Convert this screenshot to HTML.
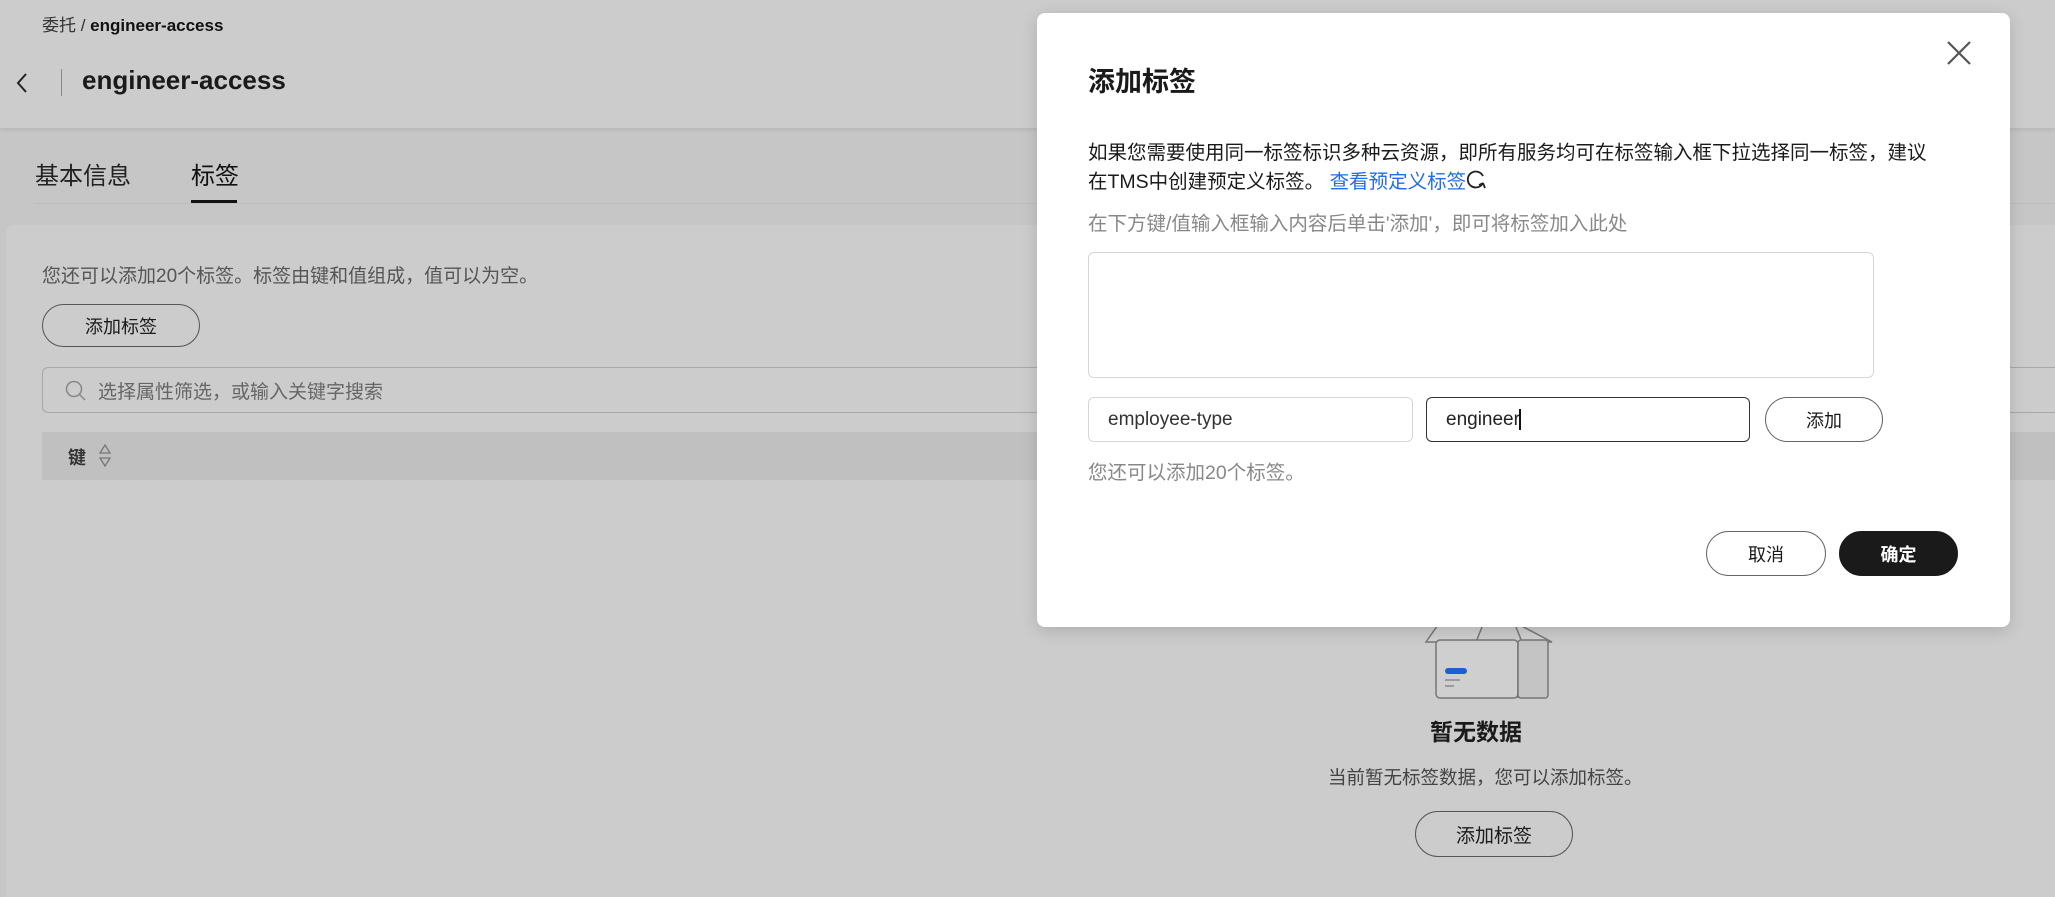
<!DOCTYPE html>
<html><head><meta charset="utf-8"><style>
*{box-sizing:border-box;margin:0;padding:0}
body{width:2055px;height:897px;overflow:hidden;background:#c6c6c6;font-family:"Liberation Sans","Noto Sans CJK SC",sans-serif;position:relative;color:#1a1a1a}
.a{position:absolute;white-space:nowrap}
.btn{position:absolute;border:1.5px solid #555;border-radius:30px;display:flex;align-items:center;justify-content:center;font-size:18px;color:#1a1a1a}
</style></head><body>
<div class="a" style="left:0;top:0;width:2055px;height:128px;background:#cccccc;box-shadow:0 2px 4px rgba(0,0,0,.08)"></div>
<div class="a" style="left:42px;top:11px;font-size:17px;color:#333">委托 / <b style="color:#111">engineer-access</b></div>
<svg class="a" style="left:14px;top:71px" width="16" height="24" viewBox="0 0 16 24"><path d="M12 3 L4 12 L12 21" fill="none" stroke="#222" stroke-width="2"/></svg>
<div class="a" style="left:61px;top:69px;width:1px;height:27px;background:#888"></div>
<div class="a" style="left:82px;top:65px;font-size:26px;font-weight:bold;color:#1a1a1a">engineer-access</div>
<div class="a" style="left:35px;top:156px;font-size:24px;color:#222">基本信息</div>
<div class="a" style="left:191px;top:156px;font-size:24px;color:#111">标签</div>
<div class="a" style="left:191px;top:200px;width:46px;height:3px;background:#111"></div>
<div class="a" style="left:34px;top:203px;width:2021px;height:1px;background:#bdbdbd"></div>
<div class="a" style="left:6px;top:225px;width:2049px;height:672px;background:#cccccc;border-radius:8px 0 0 0"></div>
<div class="a" style="left:42px;top:261px;font-size:19px;color:#555">您还可以添加20个标签。标签由键和值组成，值可以为空。</div>
<div class="btn" style="left:42px;top:304px;width:158px;height:43px">添加标签</div>
<div class="a" style="left:42px;top:367px;width:2013px;height:46px;border:1.5px solid #a8a8a8;border-right:none;border-radius:6px 0 0 6px"></div>
<svg class="a" style="left:64px;top:379px" width="24" height="24" viewBox="0 0 24 24"><circle cx="10" cy="10" r="7.5" fill="none" stroke="#888" stroke-width="1.5"/><path d="M15.5 15.5 L21 21" stroke="#888" stroke-width="1.5"/></svg>
<div class="a" style="left:98px;top:377px;font-size:19px;color:#666">选择属性筛选，或输入关键字搜索</div>
<div class="a" style="left:42px;top:432px;width:2013px;height:48px;background:#c0c0c0"></div>
<div class="a" style="left:68px;top:444px;font-size:18px;font-weight:bold;color:#333">键</div>
<svg class="a" style="left:98px;top:442px" width="14" height="28" viewBox="0 0 14 28"><path d="M2 11 L7 3 L12 11 Z M2 16 L7 24 L12 16 Z" fill="none" stroke="#777" stroke-width="1.3"/></svg>
<svg class="a" style="left:1424px;top:620px" width="136" height="80" viewBox="0 0 136 80"><path d="M2 22 L16 2 L60 2 L52 22 Z" fill="#d0d0d0" stroke="#777" stroke-width="1.5"/><path d="M90 2 L128 22 L98 22 Z" fill="#d0d0d0" stroke="#777" stroke-width="1.5"/><rect x="12" y="20" width="82" height="58" rx="4" fill="#cfcfcf" stroke="#777" stroke-width="1.5"/><path d="M94 22 L94 78" stroke="#777" stroke-width="1.5"/><rect x="94" y="20" width="30" height="58" rx="3" fill="#c4c4c4" stroke="#777" stroke-width="1.5"/><rect x="21" y="48" width="22" height="6" rx="3" fill="#1b5fd4"/><path d="M21 60 H36 M21 66 H30" stroke="#888" stroke-width="1.5"/></svg>
<div class="a" style="left:1430px;top:713px;font-size:23px;font-weight:bold;color:#1a1a1a">暂无数据</div>
<div class="a" style="left:1328px;top:764px;font-size:18.5px;color:#444">当前暂无标签数据，您可以添加标签。</div>
<div class="btn" style="left:1415px;top:811px;width:158px;height:46px;font-size:19px">添加标签</div>

<div class="a" style="left:1037px;top:13px;width:973px;height:614px;background:#fff;border-radius:8px;box-shadow:0 4px 16px rgba(0,0,0,.15)"></div>
<div class="a" style="left:1088px;top:60px;font-size:27px;font-weight:bold;color:#1a1a1a">添加标签</div>
<svg class="a" style="left:1946px;top:40px" width="26" height="26" viewBox="0 0 26 26"><path d="M2 2 L24 24 M24 2 L2 24" stroke="#555" stroke-width="2.2"/></svg>
<div class="a" style="left:1088px;top:139px;font-size:19.5px;color:#1a1a1a;line-height:29px">如果您需要使用同一标签标识多种云资源，即所有服务均可在标签输入框下拉选择同一标签，建议<br>在TMS中创建预定义标签。 <span style="color:#1e6fe8">查看预定义标签</span><svg width="22" height="22" viewBox="0 0 22 22" style="vertical-align:-3px"><path d="M17 14 A8 8 0 1 1 17 7" fill="none" stroke="#222" stroke-width="1.8"/><path d="M17 14 L19 19 M17 14 L13 16" stroke="#222" stroke-width="1.8"/></svg></div>
<div class="a" style="left:1088px;top:207px;font-size:19.5px;color:#888">在下方键/值输入框输入内容后单击'添加'，即可将标签加入此处</div>
<div class="a" style="left:1088px;top:252px;width:786px;height:126px;border:1.5px solid #d6d6d6;border-radius:6px"></div>
<div class="a" style="left:1088px;top:397px;width:325px;height:45px;border:1.5px solid #d6d6d6;border-radius:6px;font-size:19px;color:#333;padding:11px 0 0 19px">employee-type</div>
<div class="a" style="left:1426px;top:397px;width:324px;height:45px;border:1.5px solid #333;border-radius:6px;font-size:19px;color:#222;padding:11px 0 0 19px">engineer<span style="border-left:2px solid #111;margin-left:-1px"></span></div>
<div class="btn" style="left:1765px;top:397px;width:118px;height:45px;border-color:#666">添加</div>
<div class="a" style="left:1088px;top:456px;font-size:19.5px;color:#888">您还可以添加20个标签。</div>
<div class="btn" style="left:1706px;top:531px;width:120px;height:45px;border-color:#666">取消</div>
<div class="btn" style="left:1839px;top:531px;width:119px;height:45px;background:#1a1a1a;border-color:#1a1a1a;color:#fff;font-weight:bold">确定</div>
</body></html>
